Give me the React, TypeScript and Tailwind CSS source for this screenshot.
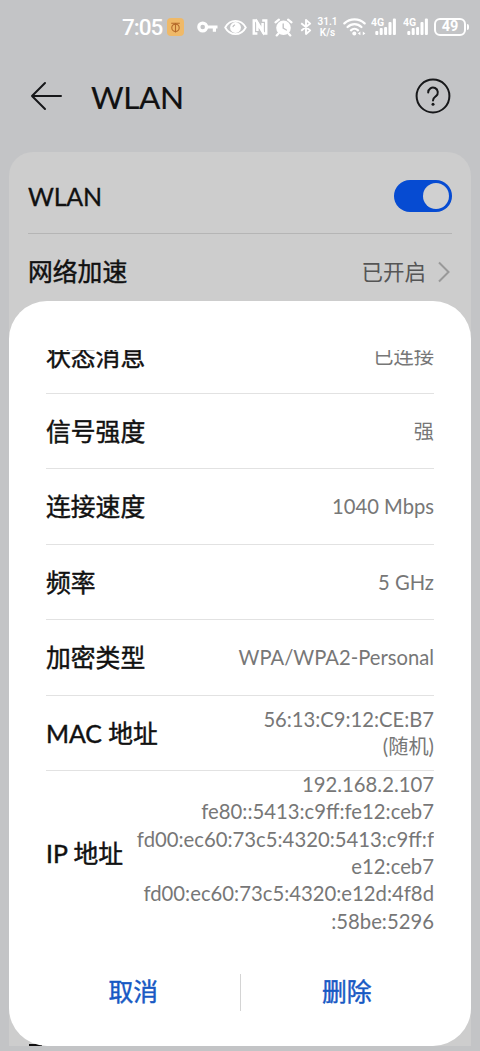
import React from 'react';

type DetailRow = {
    label: string;
    lines: string[];
};

const details: DetailRow[] = [
    { label: '信号强度', lines: ['强'] },
    { label: '连接速度', lines: ['1040 Mbps'] },
    { label: '频率', lines: ['5 GHz'] },
    { label: '加密类型', lines: ['WPA/WPA2-Personal'] },
    { label: 'MAC 地址', lines: ['56:13:C9:12:CE:B7', '(随机)'] },
];

const ipLines = [
    '192.168.2.107',
    'fe80::5413:c9ff:fe12:ceb7',
    'fd00:ec60:73c5:4320:5413:c9ff:f',
    'e12:ceb7',
    'fd00:ec60:73c5:4320:e12d:4f8d',
    ':58be:5296',
];

const labelClass = 'whitespace-nowrap text-[24.8px] [-webkit-text-stroke:0.45px_currentColor]';

const Signal: React.FC = () => (
    <svg width="27" height="20" viewBox="0 0 27 20" className="shrink-0">
        <text x="0" y="9" fontSize="10.5" fontWeight="700" fill="white" fontFamily="Roboto, sans-serif">4G</text>
        <g fill="white">
            <rect x="4.3" y="14" width="3" height="4" rx="1" />
            <rect x="8.7" y="11" width="3" height="7" rx="1" />
            <rect x="13.1" y="10" width="3" height="8" rx="1" />
            <rect x="17.5" y="5" width="3" height="13" rx="1" />
            <rect x="21.9" y="1.5" width="3" height="16.5" rx="1" />
        </g>
    </svg>
);

const StatusBar: React.FC = () => (
    <div className="flex h-[54px] shrink-0 items-center pl-[122px] text-white">
        <span className="w-[41px] whitespace-nowrap font-[Roboto,sans-serif] text-[22.5px] font-medium leading-none tracking-[-1px]">7:05</span>
        <span className="ml-[4px] flex h-[18px] w-[17px] shrink-0 items-center justify-center rounded-[4px] bg-[#efb968]">
            <svg width="13" height="13" viewBox="0 0 13 13" fill="none" stroke="#b56a2b" strokeWidth="1.1">
                <path d="M2.2 2.2h8.6M6.5 2v9.5" />
                <circle cx="6.5" cy="6.8" r="3.7" />
            </svg>
        </span>
        {/* key */}
        <svg width="21" height="14" viewBox="0 0 21 14" className="ml-[13px] shrink-0" fill="none" stroke="white" strokeWidth="3.2">
            <circle cx="5.7" cy="7" r="3.9" />
            <path d="M9.3 7H20.5M17.4 7v4.8" />
        </svg>
        {/* eye */}
        <svg width="23" height="17" viewBox="0 0 23 17" className="ml-[6px] shrink-0" fill="none" stroke="white" strokeWidth="1.8">
            <path d="M1.2 8.5C6-0.3 17-0.3 21.8 8.5C17 17.3 6 17.3 1.2 8.5Z" />
            <circle cx="11.5" cy="8.5" r="5.4" fill="white" stroke="none" />
            <path d="M8.9 8.2a2.7 2.7 0 0 1 2.2-2.3" stroke="#c3c4c6" strokeWidth="1.3" />
        </svg>
        {/* nfc */}
        <svg width="16" height="18" viewBox="0 0 16 18" className="ml-[5px] shrink-0" fill="none" stroke="white" strokeWidth="2.5">
            <path d="M5.4 15.6H1.8V2.6h2.4l6.4 10.6V5" />
            <path d="M10.2 2.4h4v13.2h-2.4L5.4 5v8" />
        </svg>
        {/* alarm */}
        <svg width="19" height="19" viewBox="0 0 19 19" className="ml-[6px] shrink-0" fill="none" stroke="white" strokeLinecap="round">
            <circle cx="9.5" cy="9.8" r="7.3" fill="white" stroke="none" />
            <path d="M1.5 4.4l3.4-2.8M17.5 4.4l-3.4-2.8M4.5 15.4l-1.8 2M14.5 15.4l1.8 2" strokeWidth="2.2" />
            <path d="M9.2 6v4.2l3.2 1.8" stroke="#c3c4c6" strokeWidth="1.4" />
        </svg>
        {/* bluetooth */}
        <svg width="12" height="18" viewBox="0 0 12 18" className="ml-[7px] shrink-0" fill="none" stroke="white" strokeWidth="1.9" strokeLinejoin="round">
            <path d="M1.2 5.2l9 7.2L6 16V2l4.2 3.6-9 7.2" />
        </svg>
        <span className="ml-[5px] flex w-[21px] shrink-0 flex-col items-center whitespace-nowrap font-[Roboto,sans-serif] text-[10px] font-semibold leading-[12px]">
            <span className="h-[11px] leading-[11px]">31.1</span>
            <span className="h-[11px] leading-[11px]">K/s</span>
        </span>
        {/* wifi */}
        <svg width="23" height="18" viewBox="0 0 23 18" className="ml-[5px] shrink-0" fill="none" stroke="white" strokeWidth="2.3" strokeLinecap="round">
            <path d="M1.4 5.4C7 0 16 0 21.6 5.4M4.6 9c4-3.9 9.8-3.9 13.8 0M8 12.3c2-1.9 5-1.9 7 0" />
            <circle cx="11.3" cy="15.5" r="2" fill="white" stroke="none" />
            <path d="M14.8 15.4l2.6-1.9v3.8zM22.4 15.4l-2.6-1.9v3.8z" fill="white" stroke="none" />
        </svg>
        <span className="ml-[5px] flex gap-[5px]">
            <Signal />
            <Signal />
        </span>
        <span className="ml-[4px] flex h-[18px] w-[32px] shrink-0 items-center justify-center rounded-[6px] border-2 border-white font-[Roboto,sans-serif] text-[14.5px] font-bold leading-none">49</span>
        <span className="ml-px h-[6px] w-[2px] rounded-r-sm bg-white"></span>
    </div>
);

const App: React.FC = () => {
    return (
        <div className="relative flex h-[1051px] w-[480px] flex-col overflow-hidden bg-[#c3c4c6] font-[Lato,'Noto_Sans_CJK_SC',sans-serif] text-[#111]">
            <StatusBar />

            <header className="flex h-[98px] shrink-0 items-start pl-[30px] pr-[29px] pt-[24px]">
                <svg width="33" height="36" viewBox="0 0 33 36" fill="none" stroke="#17181a" strokeWidth="2" strokeLinecap="round" strokeLinejoin="round">
                    <path d="M31 18H2M15 5L2 18l13 13" />
                </svg>
                <h1 className="ml-[28px] text-[31.5px] leading-[39px] tracking-[-0.4px] [-webkit-text-stroke:0.2px_currentColor]">WLAN</h1>
                <svg width="36" height="36" viewBox="0 0 36 36" className="ml-auto" fill="none" stroke="#17181a" strokeWidth="2">
                    <circle cx="18" cy="18" r="16.4" />
                    <path d="M13.2 14.4a4.8 4.8 0 1 1 7.8 3.7c-1.8 1.4-3 2.2-3 4.4" strokeLinecap="round" />
                    <circle cx="18" cy="26.2" r="1.5" fill="#17181a" stroke="none" />
                </svg>
            </header>

            <main className="mx-[9px] flex h-[894px] shrink-0 flex-col rounded-t-[24px] bg-[#cdcdcd] px-[19px]">
                <div className="flex h-[82px] shrink-0 items-center justify-between border-b border-[#b5b5b5] pt-[7px]">
                    <span className="pt-[2px] text-[25px] tracking-[-0.2px] [-webkit-text-stroke:0.3px_currentColor]">WLAN</span>
                    <span className="flex h-[32px] w-[58px] items-center justify-end rounded-full bg-[#064bd2] pr-[3px]">
                        <span className="size-[26px] rounded-full bg-[#d0d0d0]"></span>
                    </span>
                </div>
                <div className="flex h-[76px] shrink-0 items-center">
                    <span className={labelClass}>网络加速</span>
                    <span className="ml-auto text-[21.5px] text-[#555]">已开启</span>
                    <svg width="12" height="22" viewBox="0 0 12 22" className="ml-[12px] mr-[2px]" fill="none" stroke="#999" strokeWidth="2">
                        <path d="M1 1.5L10.5 11L1 20.5" />
                    </svg>
                </div>
                <span className="mt-auto ml-[1px] h-[2px] w-[13px] bg-[#111]"></span>
            </main>

            {/* Network details sheet */}
            <section className="absolute left-[9px] top-[301px] flex h-[745px] w-[462px] flex-col rounded-[38px] bg-white px-[37px] pt-[49px]">
                <div className="flex h-[587px] shrink-0 flex-col justify-end overflow-hidden">
                    <div className="flex h-[75.5px] shrink-0 items-center justify-between border-b border-[#e2e2e2] pt-[2px]">
                        <span className={labelClass}>状态消息</span>
                        <span className="text-[20.3px] text-[#777]">已连接</span>
                    </div>
                    {details.map((row) => (
                        <div key={row.label} className="flex h-[75.5px] shrink-0 items-center justify-between border-b border-[#e2e2e2] pt-px">
                            <span className={labelClass}>{row.label}</span>
                            <div className="text-right text-[20.2px] leading-[27px] text-[#777]">
                                {row.lines.map((line) => (
                                    <p key={line}>{line}</p>
                                ))}
                            </div>
                        </div>
                    ))}
                    <div className="flex h-[166px] shrink-0 items-center justify-between">
                        <span className={labelClass}>IP 地址</span>
                        <div className="whitespace-nowrap pb-[2px] text-right text-[20.3px] leading-[27.3px] text-[#777]">
                            {ipLines.map((line) => (
                                <p key={line}>{line}</p>
                            ))}
                        </div>
                    </div>
                </div>

                <div className="mt-[37px] flex h-[37px] items-center text-[24.8px] text-[#1759c4] [-webkit-text-stroke:0.45px_currentColor]">
                    <button className="flex-1 pb-[2px] pr-[19px]">取消</button>
                    <span className="h-full w-px bg-[#d4d4d4]"></span>
                    <button className="flex-1 pb-[2px] pl-[19px]">删除</button>
                </div>
            </section>
        </div>
    );
};

export default App;
